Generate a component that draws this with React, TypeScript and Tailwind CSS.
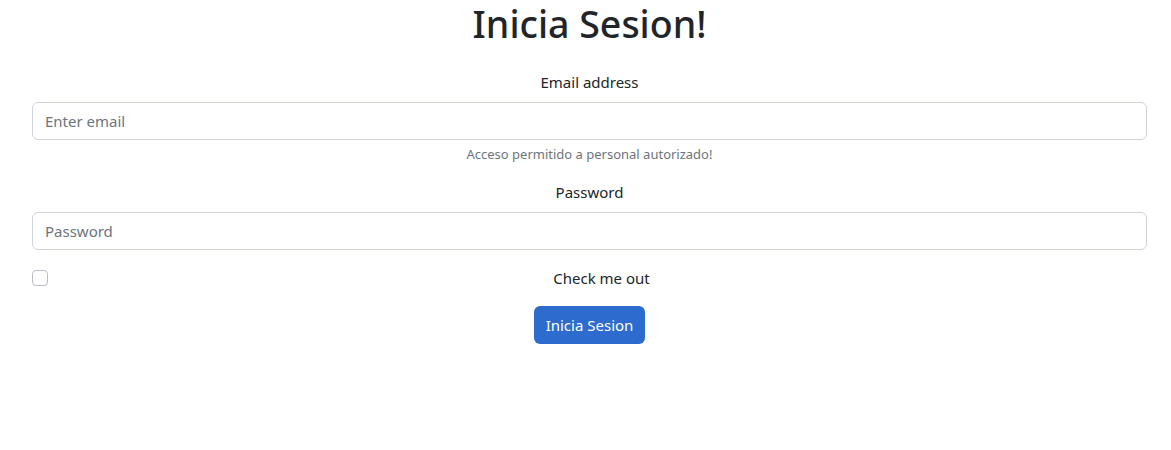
import React from 'react';

const App = () => {
  return (
    <div className="min-h-[450px] bg-white pl-[32px] pr-[24px] text-[#212529] font-['Noto_Sans','Open_Sans',sans-serif]">
      <h1 className="text-center text-[37.5px] leading-[48px] font-medium">Inicia Sesion!</h1>

      <form className="mt-[22px]" onSubmit={(e) => e.preventDefault()}>
        <div className="mb-4">
          <label htmlFor="email" className="block text-center text-[15px] leading-6 mb-2">
            Email address
          </label>
          <input
            id="email"
            type="email"
            placeholder="Enter email"
            className="block w-full h-[38px] px-3 text-[15px] border border-[#ced4da] rounded-md placeholder:text-[#6c757d] outline-none"
          />
          <div className="mt-1 text-center text-[13px] leading-5 text-[#6c757d]">
            Acceso permitido a personal autorizado!
          </div>
        </div>

        <div className="mb-4">
          <label htmlFor="password" className="block text-center text-[15px] leading-6 mb-2">
            Password
          </label>
          <input
            id="password"
            type="password"
            placeholder="Password"
            className="block w-full h-[38px] px-3 text-[15px] border border-[#ced4da] rounded-md placeholder:text-[#6c757d] outline-none"
          />
        </div>

        <div className="mb-4 flex items-start min-h-6">
          <input
            id="check"
            type="checkbox"
            className="appearance-none mt-1 w-4 h-4 shrink-0 border border-[#b9bec4] rounded-[4px] bg-white"
          />
          <label htmlFor="check" className="flex-1 ml-2 text-center text-[15px] leading-6">
            Check me out
          </label>
        </div>

        <div className="flex justify-center">
          <button
            type="submit"
            className="h-[38px] px-3 rounded-md bg-[#2d6cce] text-white text-[15px]"
          >
            Inicia Sesion
          </button>
        </div>
      </form>
    </div>
  );
};

export default App;
